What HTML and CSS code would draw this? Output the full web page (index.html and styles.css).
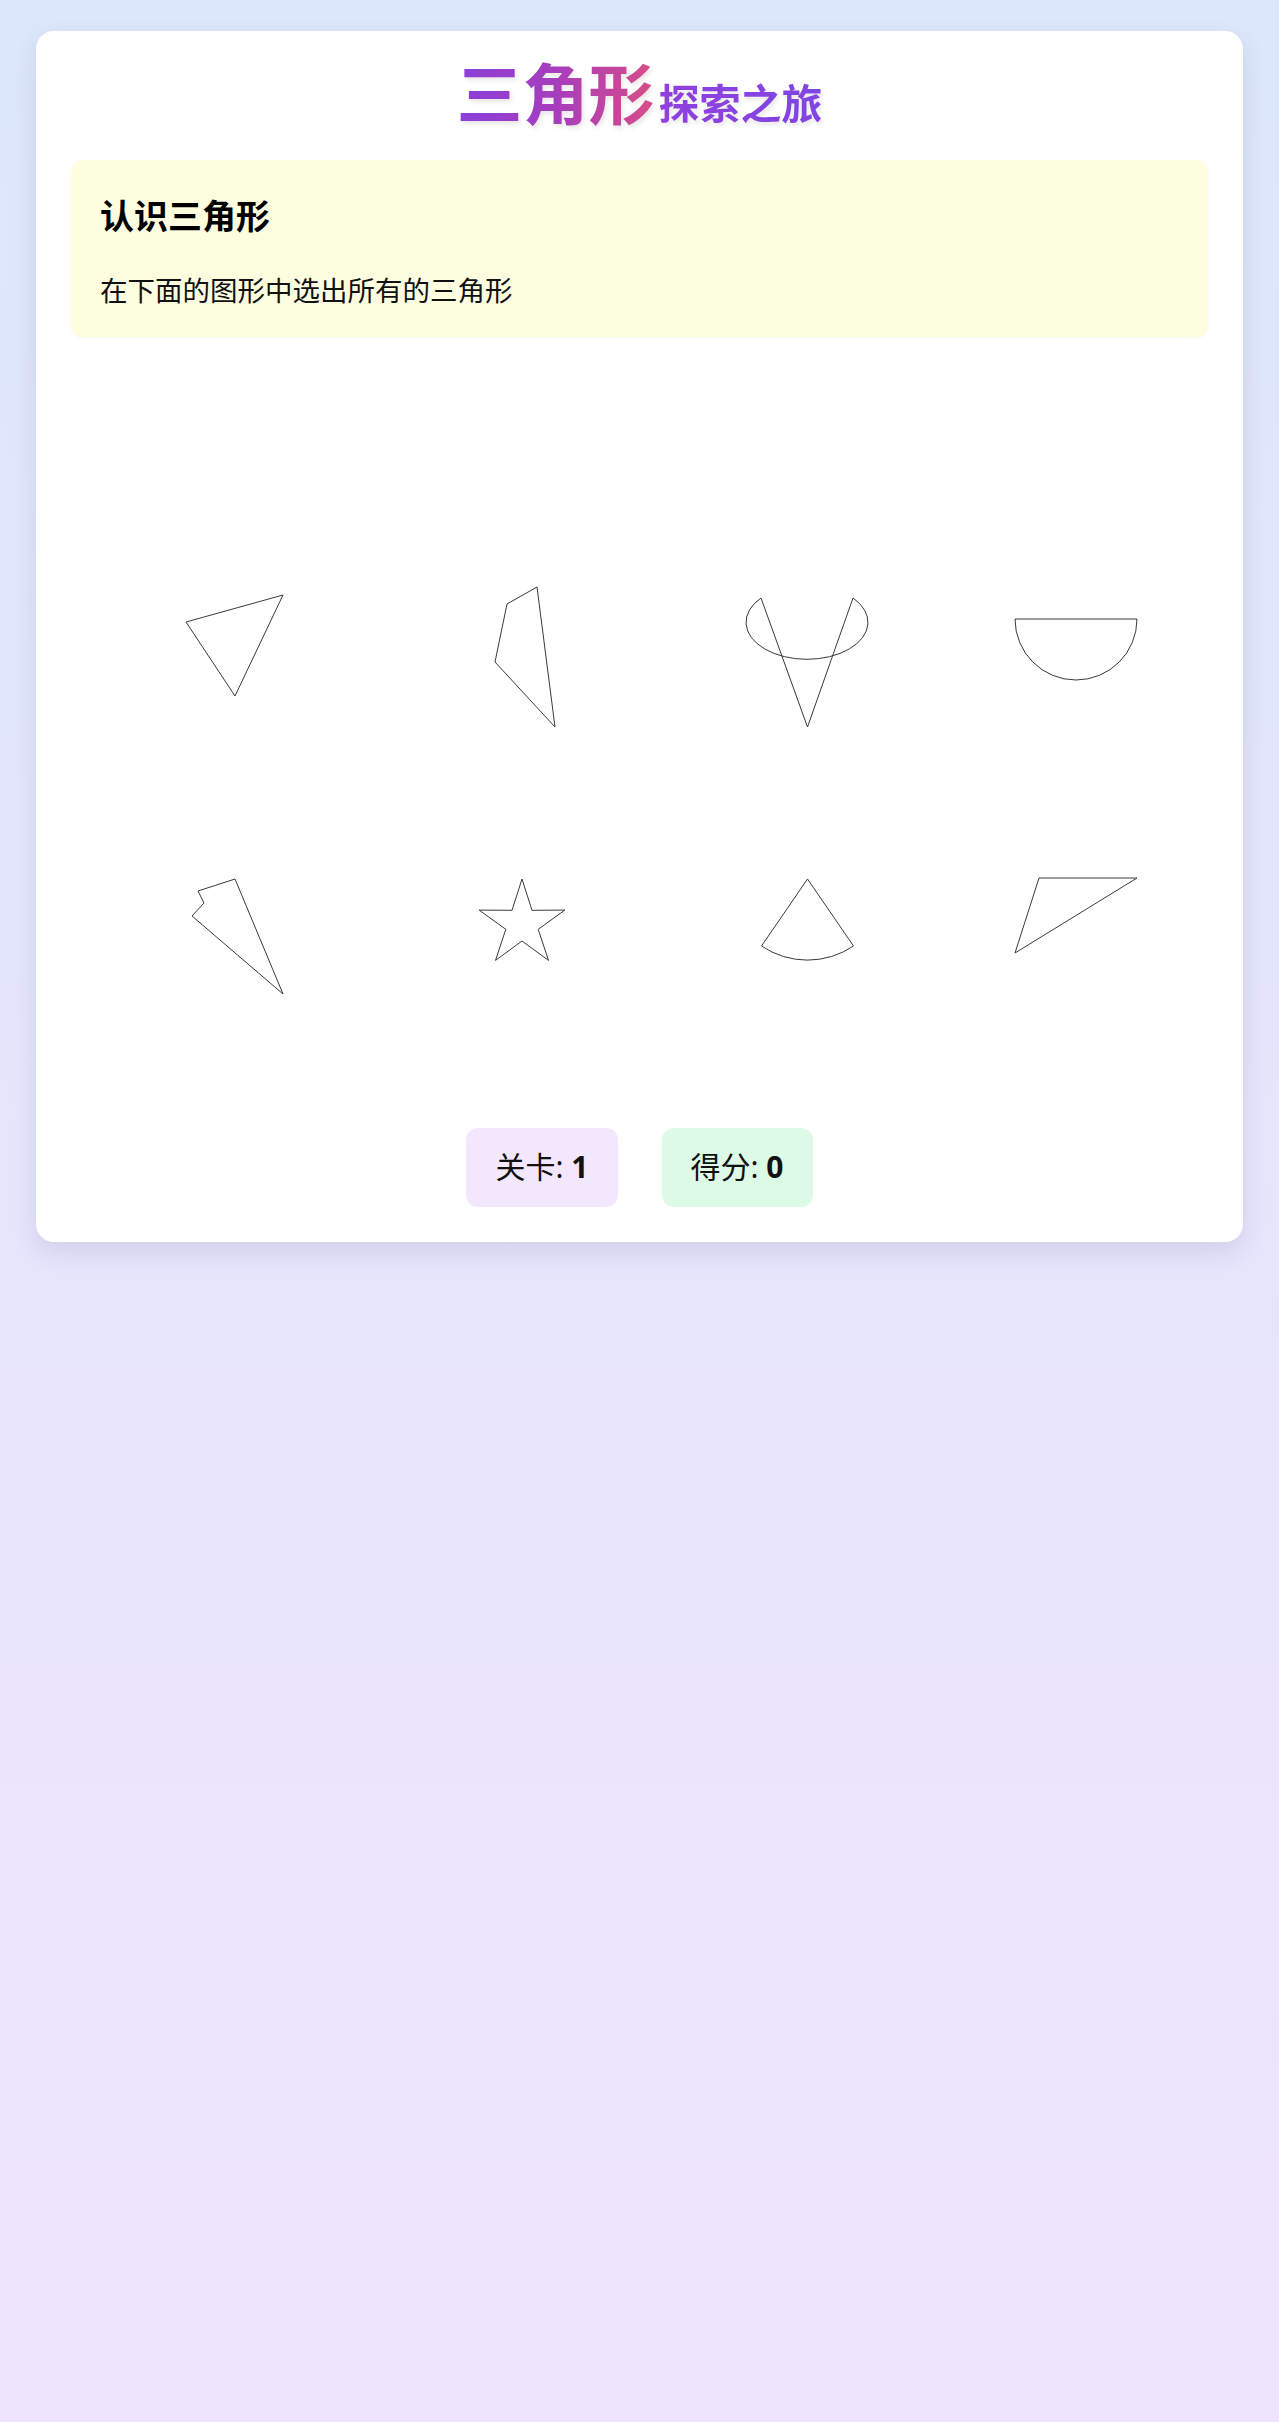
FILE: index.html
```html
<!DOCTYPE html>
<html lang="zh-CN">
<head>
<meta charset="utf-8">
<title>三角形探索之旅</title>
<link rel="stylesheet" href="styles.css">
</head>
<body>
<main class="card">
  <h1 class="title"><span class="title-main">三角形</span><span class="title-sub">探索之旅</span></h1>

  <section class="task">
    <h2 class="task-title">认识三角形</h2>
    <p class="task-text">在下面的图形中选出所有的三角形</p>
  </section>

  <section class="shapes">
    <div class="cell">
      <svg class="shape" width="100%" height="360">
        <polygon points="115,252 212,225 164,326"/>
      </svg>
    </div>
    <div class="cell">
      <svg class="shape" width="100%" height="360">
        <polygon points="152,234 182,217 200,357 140,292"/>
      </svg>
    </div>
    <div class="cell">
      <svg class="shape" width="100%" height="360">
        <path d="M121 228 A61 37 0 1 0 213 228 L167.5 357 Z"/>
      </svg>
    </div>
    <div class="cell">
      <svg class="shape" width="100%" height="360">
        <path d="M91 249 L213 249 A61 61 0 0 1 91 249 Z"/>
      </svg>
    </div>
    <div class="cell">
      <svg class="shape" width="100%" height="360">
        <polygon points="127,161 164,149 212,264 121,186 133,173"/>
      </svg>
    </div>
    <div class="cell">
      <svg class="shape" width="100%" height="360">
        <polygon points="167,149 177,180.3 209.8,180.1 183.2,199.3 193.5,230.4 167,211 140.5,230.4 150.8,199.3 124.2,180.1 157,180.3"/>
      </svg>
    </div>
    <div class="cell">
      <svg class="shape" width="100%" height="360">
        <path d="M167.5 149 L121.5 216 A82 82 0 0 0 213.5 216 Z"/>
      </svg>
    </div>
    <div class="cell">
      <svg class="shape" width="100%" height="360">
        <polygon points="115,148 213,148 91,223"/>
      </svg>
    </div>
  </section>

  <footer class="stats">
    <div class="badge badge-level">关卡: <b>1</b></div>
    <div class="badge badge-score">得分: <b>0</b></div>
  </footer>
</main>
</body>
</html>
```
FILE: styles.css
```css
html, body {
  margin: 0;
  padding: 0;
}

body {
  min-height: 2422px;
  box-sizing: border-box;
  padding: 31px 36px;
  background: linear-gradient(180deg, #dce7fb 0%, #e6e5fc 50%, #efe4fd 100%);
  font-family: "Noto Sans", "Noto Sans CJK SC", sans-serif;
  color: #111;
}

.card {
  background: #fff;
  border-radius: 18px;
  padding: 21px 35px 35px;
  box-shadow: 0 10px 24px rgba(60, 60, 110, 0.12);
}

.title {
  margin: 0 0 31px;
  text-align: center;
  font-weight: 700;
  line-height: 77px;
  height: 77px;
  filter: drop-shadow(2px 3px 2px rgba(0, 0, 0, 0.09));
}

.title-main {
  font-size: 66px;
  font-family: "Noto Sans CJK SC", sans-serif;
  background: linear-gradient(90deg, #8a3fd9 0%, #a73dbd 50%, #d84d86 100%);
  -webkit-background-clip: text;
  background-clip: text;
  color: transparent;
}

.title-sub {
  font-size: 41px;
  font-family: "Noto Sans CJK SC", sans-serif;
  margin-left: 4px;
  background: linear-gradient(90deg, #9140de 0%, #7f45e2 100%);
  -webkit-background-clip: text;
  background-clip: text;
  color: transparent;
}

.task {
  background: #fdfee0;
  border-radius: 12px;
  padding: 29px 29px 27px;
  box-shadow: 0 1px 3px rgba(0, 0, 0, 0.04);
}

.task-title {
  margin: 0 0 29px;
  font-size: 34px;
  line-height: 1.5;
  font-weight: 700;
  color: #000;
  font-family: "Noto Sans CJK SC", sans-serif;
}

.task-text {
  margin: 0;
  font-size: 27.5px;
  line-height: 1.5;
  color: #111;
  font-family: "Noto Sans CJK SC", sans-serif;
}

.shapes {
  margin-top: 33px;
  display: grid;
  grid-template-columns: repeat(4, 1fr);
  grid-auto-rows: 360px;
}

.cell {
  min-width: 0;
}

.shape {
  display: block;
  overflow: visible;
}

.shape polygon,
.shape path {
  fill: none;
  stroke: #3a3a3a;
  stroke-width: 1;
  stroke-linejoin: miter;
}

.stats {
  margin-top: 38px;
  display: flex;
  justify-content: center;
  gap: 44px;
}

.badge {
  font-size: 30px;
  line-height: 42px;
  padding: 18px 29px 19px;
  border-radius: 12px;
  color: #111;
}

.badge b {
  font-weight: 700;
}

.badge-level {
  background: #f2e7fd;
}

.badge-score {
  background: #dcfae6;
}
```
